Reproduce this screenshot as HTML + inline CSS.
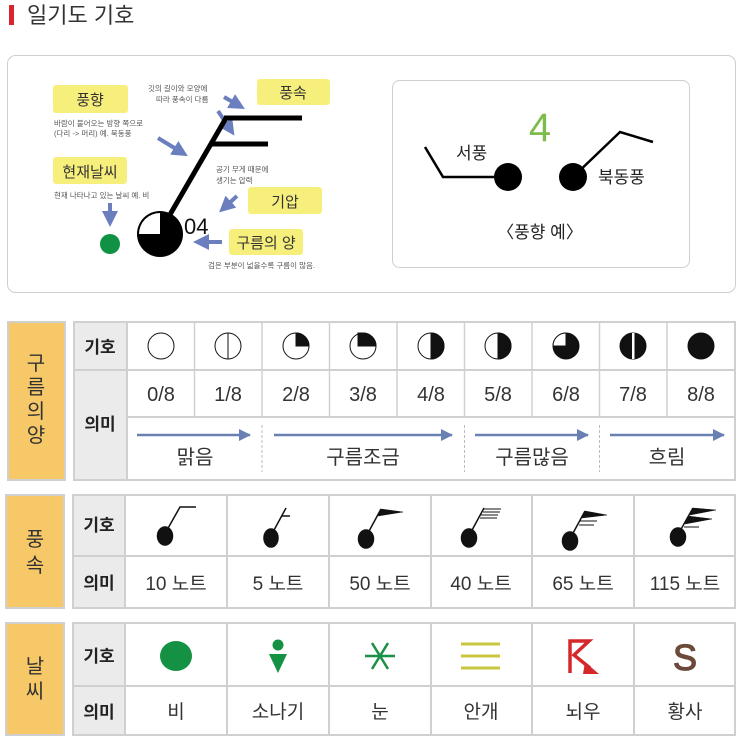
<!DOCTYPE html>
<html><head><meta charset="utf-8"><style>
html,body{margin:0;padding:0;background:#fff;}
svg{display:block;font-family:"Liberation Sans","Noto Sans CJK KR",sans-serif;}
</style></head><body>
<svg width="740" height="739" viewBox="0 0 740 739" xmlns="http://www.w3.org/2000/svg">
<defs>
<marker id="ah" markerWidth="4" markerHeight="4" refX="2" refY="2" orient="auto" markerUnits="strokeWidth"><path d="M0,0 L4,2 L0,4 z" fill="#6b7fbf"/></marker>
<marker id="ta" markerWidth="12" markerHeight="12" refX="11" refY="6" orient="auto" markerUnits="userSpaceOnUse"><path d="M0,0 L12,6 L0,12 z" fill="#6a80b3"/></marker>
</defs>
<rect x="9" y="5" width="5" height="20" fill="#d7262e"/>
<text x="27" y="23" font-size="22" fill="#333">일기도 기호</text>

<rect x="7.5" y="55.5" width="728" height="237" rx="8" fill="#fff" stroke="#cfcfcf"/>
<g font-size="15" fill="#333" text-anchor="middle">
<rect x="53" y="85" width="75" height="28" rx="3" fill="#f7ef7c"/><text x="90" y="105">풍향</text>
<rect x="53" y="157" width="74" height="27" rx="3" fill="#f7ef7c"/><text x="90" y="177">현재날씨</text>
<rect x="257" y="79" width="73" height="26" rx="3" fill="#f7ef7c"/><text x="293" y="98">풍속</text>
<rect x="248" y="187" width="74" height="27" rx="3" fill="#f7ef7c"/><text x="285" y="207">기압</text>
<rect x="229" y="229" width="74" height="26" rx="3" fill="#f7ef7c"/><text x="266" y="248">구름의 양</text>
</g>
<g font-size="7.5" fill="#555">
<text x="54" y="126">바람이 불어오는 방향 쪽으로</text>
<text x="54" y="136">(다리 -&gt; 머리) 예. 북동풍</text>
<text x="54" y="198">현재 나타나고 있는 날씨 예. 비</text>
<text x="148" y="91">깃의 길이와 모양에</text>
<text x="156" y="102">따라 풍속이 다름</text>
<text x="216" y="172">공기 무게 때문에</text>
<text x="216" y="183">생기는 압력</text>
<text x="208" y="268">검은 부분이 넓을수록 구름이 많음.</text>
</g>
<g stroke="#6b7fbf" stroke-width="4" fill="none" marker-end="url(#ah)">
<line x1="224" y1="97" x2="238" y2="105"/>
<line x1="218" y1="111" x2="230" y2="129"/>
<line x1="158" y1="138" x2="181" y2="152"/>
<line x1="237" y1="196" x2="225" y2="207"/>
<line x1="222" y1="242" x2="201" y2="242"/>
<line x1="110" y1="203" x2="110" y2="219"/>
</g>
<circle cx="110" cy="244" r="10" fill="#119143"/>
<g stroke="#000" stroke-width="5" fill="none">
<line x1="168" y1="218" x2="226" y2="118"/>
<line x1="224" y1="118" x2="302" y2="118"/>
<line x1="212" y1="144" x2="268" y2="144"/>
</g>
<circle cx="160" cy="234" r="23" fill="#000"/>
<path d="M160,234 L160,213 A21,21 0 0 0 139,234 Z" fill="#fff"/>
<text x="184" y="234" font-size="22" fill="#111">04</text>

<rect x="392.5" y="80.5" width="297" height="187" rx="7" fill="#fff" stroke="#cfcfcf"/>
<text x="540" y="141" font-size="40" fill="#7cbc4a" text-anchor="middle" font-weight="300">4</text>
<polyline points="425,147 443,177 508,177" stroke="#000" stroke-width="2.5" fill="none"/>
<circle cx="508" cy="177" r="14" fill="#000"/>
<polyline points="573,177 620,132 653,142" stroke="#000" stroke-width="2.5" fill="none"/>
<circle cx="573" cy="177" r="14" fill="#000"/>
<text x="456" y="159" font-size="17" fill="#222">서풍</text>
<text x="598" y="183" font-size="17" fill="#222">북동풍</text>
<text x="540" y="238" font-size="17" fill="#222" text-anchor="middle">〈풍향 예〉</text>

<rect x="8" y="322" width="57" height="158" fill="#f6c868" stroke="#d0d0d0" stroke-width="2"/>
<g font-size="20" fill="#333" text-anchor="middle">
<text x="36" y="370">구</text><text x="36" y="394">름</text><text x="36" y="418">의</text><text x="36" y="442">양</text>
</g>
<rect x="74" y="322" width="661" height="158" fill="#fff" stroke="#d0d0d0" stroke-width="2"/>
<rect x="74" y="322" width="53" height="158" fill="#ebebeb" stroke="#d0d0d0" stroke-width="2"/>
<line x1="74" y1="370" x2="735" y2="370" stroke="#d0d0d0" stroke-width="2"/>
<line x1="127" y1="417" x2="735" y2="417" stroke="#d0d0d0" stroke-width="2"/>
<g stroke="#d0d0d0" stroke-width="1.5">
<line x1="194.5" y1="322" x2="194.5" y2="417"/><line x1="262" y1="322" x2="262" y2="417"/>
<line x1="329.5" y1="322" x2="329.5" y2="417"/><line x1="397" y1="322" x2="397" y2="417"/>
<line x1="464.5" y1="322" x2="464.5" y2="417"/><line x1="532" y1="322" x2="532" y2="417"/>
<line x1="599.5" y1="322" x2="599.5" y2="417"/><line x1="667" y1="322" x2="667" y2="417"/>
</g>
<g stroke="#bbb" stroke-width="1" stroke-dasharray="3,2">
<line x1="262" y1="425" x2="262" y2="472"/><line x1="464.5" y1="425" x2="464.5" y2="472"/><line x1="599.5" y1="425" x2="599.5" y2="472"/>
</g>
<g font-size="17" fill="#222" text-anchor="middle" font-weight="bold">
<text x="100" y="353">기호</text><text x="100" y="430">의미</text>
</g>
<g stroke="#111" stroke-width="1" fill="#fff">
<circle cx="161" cy="346" r="13"/>
<circle cx="228" cy="346" r="13"/><line x1="228" y1="333" x2="228" y2="359"/>
<circle cx="296" cy="346" r="13"/><path d="M296,346 V333 A13,13 0 0 1 309,346 Z" fill="#111"/>
<circle cx="363" cy="346" r="13"/><path d="M363,346 V333 A13,13 0 0 1 376,346 Z M363,346 V333 H358 V346 Z" fill="#111"/>
<circle cx="431" cy="346" r="13"/><path d="M431,333 A13,13 0 0 1 431,359 Z" fill="#111"/>
<circle cx="498" cy="346" r="13"/><path d="M498,333 A13,13 0 0 1 498,359 Z" fill="#111"/>
<circle cx="566" cy="346" r="13" fill="#111"/><path d="M566,346 V333 A13,13 0 0 0 553,346 Z" fill="#fff"/>
<circle cx="633" cy="346" r="13" fill="#111"/><rect x="632" y="333" width="2.5" height="26" fill="#fff" stroke="none"/>
<circle cx="701" cy="346" r="13" fill="#111"/>
</g>
<g font-size="20" fill="#333" text-anchor="middle">
<text x="161" y="401">0/8</text><text x="228" y="401">1/8</text><text x="296" y="401">2/8</text>
<text x="363" y="401">3/8</text><text x="431" y="401">4/8</text><text x="498" y="401">5/8</text>
<text x="566" y="401">6/8</text><text x="633" y="401">7/8</text><text x="701" y="401">8/8</text>
<text x="195" y="464">맑음</text><text x="363" y="464">구름조금</text><text x="532" y="464">구름많음</text><text x="667" y="464">흐림</text>
</g>
<g stroke="#6a80b3" stroke-width="2.5" marker-end="url(#ta)">
<line x1="137" y1="435" x2="250" y2="435"/><line x1="274" y1="435" x2="452" y2="435"/>
<line x1="475" y1="435" x2="588" y2="435"/><line x1="610" y1="435" x2="724" y2="435"/>
</g>

<rect x="6" y="495" width="58" height="113" fill="#f6c868" stroke="#d0d0d0" stroke-width="2"/>
<g font-size="20" fill="#333" text-anchor="middle"><text x="35" y="546">풍</text><text x="35" y="572">속</text></g>
<rect x="73" y="495" width="662" height="113" fill="#fff" stroke="#d0d0d0" stroke-width="2"/>
<rect x="73" y="495" width="52" height="113" fill="#ebebeb" stroke="#d0d0d0" stroke-width="2"/>
<line x1="73" y1="556" x2="735" y2="556" stroke="#d0d0d0" stroke-width="2"/>
<g stroke="#d0d0d0" stroke-width="2">
<line x1="227" y1="495" x2="227" y2="608"/><line x1="329" y1="495" x2="329" y2="608"/>
<line x1="431" y1="495" x2="431" y2="608"/><line x1="532" y1="495" x2="532" y2="608"/><line x1="634" y1="495" x2="634" y2="608"/>
</g>
<g font-size="17" fill="#222" text-anchor="middle" font-weight="bold"><text x="99" y="531">기호</text><text x="99" y="589">의미</text></g>
<g font-size="19" fill="#333" text-anchor="middle">
<text x="176" y="590">10 노트</text><text x="278" y="590">5 노트</text><text x="380" y="590">50 노트</text>
<text x="481" y="590">40 노트</text><text x="583" y="590">65 노트</text><text x="685" y="590">115 노트</text>
</g>
<g fill="#111" stroke="#111" stroke-width="1.5">
<ellipse cx="165" cy="536" rx="7.5" ry="9"/><polyline points="167,530 180,507 196,507" fill="none"/>
<ellipse cx="271" cy="538" rx="7" ry="9"/><polyline points="273,532 286,508" fill="none"/><line x1="282" y1="516" x2="290" y2="516"/>
<ellipse cx="366" cy="539" rx="7.5" ry="9"/><line x1="368" y1="533" x2="381" y2="509"/><path d="M381,509 L403,512 L378,516 Z" stroke-width="0.5"/>
<ellipse cx="469" cy="538" rx="7.5" ry="9"/><line x1="471" y1="532" x2="484" y2="508"/><g stroke-width="1"><line x1="484" y1="509" x2="501" y2="509"/><line x1="483" y1="512" x2="500" y2="512"/><line x1="481" y1="515" x2="498" y2="515"/><line x1="480" y1="518" x2="497" y2="518"/></g>
<ellipse cx="570" cy="541" rx="7.5" ry="9"/><line x1="572" y1="535" x2="585" y2="511"/><path d="M585,511 L607,515 L582,518 Z" stroke-width="0.5"/><g stroke-width="1"><line x1="580" y1="521" x2="597" y2="521"/><line x1="579" y1="525" x2="594" y2="525"/></g>
<ellipse cx="678" cy="537" rx="7.5" ry="9"/><line x1="680" y1="531" x2="693" y2="508"/><path d="M693,508 L716,510 L690,515 Z M688,516 L712,519 L685,524 Z" stroke-width="0.5"/><line x1="684" y1="527" x2="699" y2="527" stroke-width="1"/>
</g>

<rect x="6" y="623" width="58" height="112" fill="#f6c868" stroke="#d0d0d0" stroke-width="2"/>
<g font-size="20" fill="#333" text-anchor="middle"><text x="35" y="673">날</text><text x="35" y="698">씨</text></g>
<rect x="73" y="623" width="662" height="112" fill="#fff" stroke="#d0d0d0" stroke-width="2"/>
<rect x="73" y="623" width="52" height="112" fill="#ebebeb" stroke="#d0d0d0" stroke-width="2"/>
<line x1="73" y1="686" x2="735" y2="686" stroke="#d0d0d0" stroke-width="2"/>
<g stroke="#d0d0d0" stroke-width="2">
<line x1="227" y1="623" x2="227" y2="735"/><line x1="329" y1="623" x2="329" y2="735"/>
<line x1="431" y1="623" x2="431" y2="735"/><line x1="532" y1="623" x2="532" y2="735"/><line x1="634" y1="623" x2="634" y2="735"/>
</g>
<g font-size="17" fill="#222" text-anchor="middle" font-weight="bold"><text x="99" y="662">기호</text><text x="99" y="718">의미</text></g>
<g font-size="19" fill="#333" text-anchor="middle">
<text x="176" y="718">비</text><text x="278" y="718">소나기</text><text x="380" y="718">눈</text>
<text x="481" y="718">안개</text><text x="583" y="718">뇌우</text><text x="685" y="718">황사</text>
</g>
<ellipse cx="176" cy="656" rx="16" ry="15" fill="#149143"/>
<circle cx="278" cy="645" r="5.5" fill="#149143"/><path d="M269,654 L287,654 L278,673 Z" fill="#149143"/>
<g stroke="#1a8f48" stroke-width="2.5"><line x1="365" y1="656" x2="395" y2="656"/><line x1="372" y1="643" x2="388" y2="669"/><line x1="388" y1="643" x2="372" y2="669"/></g>
<g stroke="#c9c63c" stroke-width="3"><line x1="461" y1="644" x2="500" y2="644"/><line x1="461" y1="656" x2="500" y2="656"/><line x1="461" y1="668" x2="500" y2="668"/></g>
<g stroke="#d6282b" stroke-width="3.5" fill="none"><polyline points="570,673 570,641 589,641 574,655 590,668"/></g>
<path d="M585,662 L599,674 L583,674 Z" fill="#d6282b"/>
<text x="685" y="670" font-size="36" fill="#6b4a3a" text-anchor="middle" stroke="#6b4a3a" stroke-width="1.2">S</text>
</svg>
</body></html>
